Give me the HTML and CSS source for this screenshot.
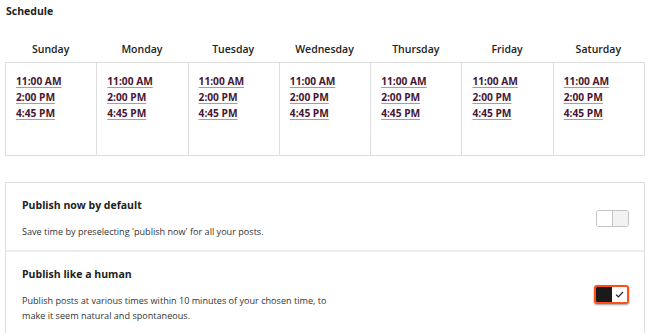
FILE: index.html
```html
<!DOCTYPE html>
<html lang="en">
<head>
  <meta charset="UTF-8" />
  <title>Schedule</title>
  <link rel="stylesheet" href="styles.css">
</head>
<body>
  <h2 class="title">Schedule</h2>
  <div class="schedule">
    <div class="day-head">Sunday</div>
    <div class="day-head">Monday</div>
    <div class="day-head">Tuesday</div>
    <div class="day-head">Wednesday</div>
    <div class="day-head">Thursday</div>
    <div class="day-head">Friday</div>
    <div class="day-head">Saturday</div>
    <div class="day-cell"><a href="#">11:00 AM</a><a href="#">2:00 PM</a><a href="#">4:45 PM</a></div>
    <div class="day-cell"><a href="#">11:00 AM</a><a href="#">2:00 PM</a><a href="#">4:45 PM</a></div>
    <div class="day-cell"><a href="#">11:00 AM</a><a href="#">2:00 PM</a><a href="#">4:45 PM</a></div>
    <div class="day-cell"><a href="#">11:00 AM</a><a href="#">2:00 PM</a><a href="#">4:45 PM</a></div>
    <div class="day-cell"><a href="#">11:00 AM</a><a href="#">2:00 PM</a><a href="#">4:45 PM</a></div>
    <div class="day-cell"><a href="#">11:00 AM</a><a href="#">2:00 PM</a><a href="#">4:45 PM</a></div>
    <div class="day-cell"><a href="#">11:00 AM</a><a href="#">2:00 PM</a><a href="#">4:45 PM</a></div>
  </div>
  <div class="settings">
    <div class="setting">
      <div class="setting-text">
        <h3>Publish now by default</h3>
        <p>Save time by preselecting 'publish now' for all your posts.</p>
      </div>
      <span class="toggle"><span class="half"></span><span class="half off"></span></span>
    </div>
    <div class="setting">
      <div class="setting-text">
        <h3>Publish like a human</h3>
        <p>Publish posts at various times within 10 minutes of your chosen time, to make it seem natural and spontaneous.</p>
      </div>
      <span class="toggle on"><span class="half dark"></span><span class="half check"><svg width="9" height="7" viewBox="0 0 9 7"><path d="M1 3.6 L3.3 5.8 L8 1" fill="none" stroke="#222" stroke-width="1.2"/></svg></span></span>
    </div>
  </div>
</body>
</html>
```

FILE: styles.css
```css
body {
  margin: 0;
  padding: 0 5px;
  font-family: 'Open Sans', sans-serif;
  color: #222;
  background: white;
}
.title {
  margin: 3px 0 0 1px;
  font-size: 10.5px;
  font-weight: 700;
  line-height: 16px;
}
.schedule {
  margin-top: 22px;
  display: grid;
  grid-template-columns: repeat(7, 1fr);
  border-right: 1px solid #dedede;
}
.day-head {
  text-align: center;
  font-size: 10.5px;
  font-weight: 600;
  line-height: 16px;
  padding-bottom: 5px;
  border-right: 1px solid white;
  margin-right: -1px;
}
.day-cell {
  box-sizing: border-box;
  display: flex;
  flex-direction: column;
  gap: 1px;
  height: 94px;
  padding: 11px 10px 0;
  border-top: 1px solid #dedede;
  border-left: 1px solid #dedede;
  border-bottom: 1px solid #dedede;
}
.day-cell a {
  color: #451634;
  font-size: 10.2px;
  font-weight: 700;
  line-height: 15px;
  text-decoration: underline;
  text-decoration-color: #b891ab;
  text-underline-offset: 2px;
}
.settings {
  margin-top: 26px;
  border: 1px solid #dedede;
  border-bottom: none;
}
.setting {
  display: flex;
  align-items: center;
  justify-content: space-between;
  padding: 14px 15px 10px 16px;
  border-bottom: 2px solid #ececec;
}
.setting h3 {
  margin: 0 0 11px;
  font-size: 10.5px;
  font-weight: 700;
  line-height: 16px;
}
.setting p {
  margin: 0;
  max-width: 312px;
  font-size: 9.1px;
  line-height: 15.5px;
  color: #333;
}
.toggle {
  display: flex;
  width: 31px;
  height: 15px;
  border: 1px solid #c4c4c4;
  border-radius: 3px;
  overflow: hidden;
}
.toggle .half {
  flex: 1;
  background: white;
}
.toggle .half.off {
  background: #f2f2f2;
  border-left: 1px solid #c4c4c4;
}
.toggle.on {
  border: 2px solid #ff4f14;
  box-shadow: 0 1px 2px rgba(0, 0, 0, 0.4);
}
.toggle .half.dark {
  background: #1a1a1a;
}
.toggle .half.check {
  display: flex;
  align-items: center;
  justify-content: center;
}
```
